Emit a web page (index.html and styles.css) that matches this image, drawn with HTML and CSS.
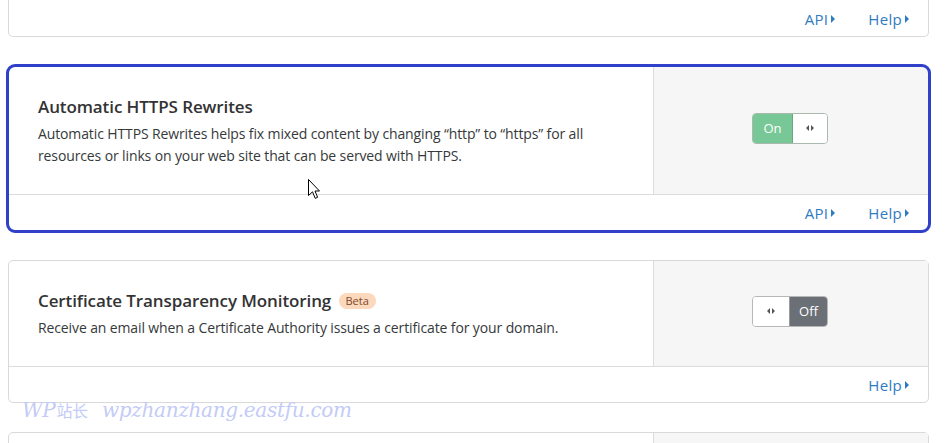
FILE: index.html
```html
<!DOCTYPE html>
<html lang="en">
<head>
<meta charset="utf-8">
<title>SSL/TLS settings</title>
<link rel="stylesheet" href="styles.css">
</head>
<body>
<div class="page">
  <section class="card card-tail">
    <footer class="card-foot">
      <a class="foot-link" href="#">API<svg class="caret" viewBox="0 0 4 8" width="4" height="8"><path d="M0 0L4 4L0 8Z"/></svg></a>
      <a class="foot-link" href="#">Help<svg class="caret" viewBox="0 0 4 8" width="4" height="8"><path d="M0 0L4 4L0 8Z"/></svg></a>
    </footer>
  </section>

  <section class="card is-focused">
    <div class="card-main">
      <div class="card-body">
        <h3 class="card-title">Automatic HTTPS Rewrites</h3>
        <p class="card-text">Automatic HTTPS Rewrites helps fix mixed content by changing “http” to “https” for all resources or links on your web site that can be served with HTTPS.</p>
      </div>
      <div class="card-control">
        <div class="toggle is-on">
          <span class="toggle-label">On</span>
          <span class="toggle-handle"><svg viewBox="0 0 8 6" width="8" height="6"><path d="M3 0L0 3L3 6Z M5 0L8 3L5 6Z"/></svg></span>
        </div>
      </div>
    </div>
    <footer class="card-foot">
      <a class="foot-link" href="#">API<svg class="caret" viewBox="0 0 4 8" width="4" height="8"><path d="M0 0L4 4L0 8Z"/></svg></a>
      <a class="foot-link" href="#">Help<svg class="caret" viewBox="0 0 4 8" width="4" height="8"><path d="M0 0L4 4L0 8Z"/></svg></a>
    </footer>
  </section>

  <section class="card">
    <div class="card-main">
      <div class="card-body">
        <h3 class="card-title">Certificate Transparency Monitoring <span class="badge">Beta</span></h3>
        <p class="card-text">Receive an email when a Certificate Authority issues a certificate for your domain.</p>
      </div>
      <div class="card-control">
        <div class="toggle is-off">
          <span class="toggle-handle"><svg viewBox="0 0 8 6" width="8" height="6"><path d="M3 0L0 3L3 6Z M5 0L8 3L5 6Z"/></svg></span>
          <span class="toggle-label">Off</span>
        </div>
      </div>
    </div>
    <footer class="card-foot">
      <a class="foot-link" href="#">Help<svg class="caret" viewBox="0 0 4 8" width="4" height="8"><path d="M0 0L4 4L0 8Z"/></svg></a>
    </footer>
  </section>

  <section class="card card-next">
    <div class="card-main">
      <div class="card-body"></div>
      <div class="card-control"></div>
    </div>
  </section>

  <div class="watermark">WP<span class="wm-cjk">站长</span> wpzhanzhang.eastfu.com</div>
  <svg class="cursor" viewBox="0 0 12 20" width="12" height="20"><path d="M0.5 0.5L0.5 16.5L4.5 12.8L7.2 19.3L9.6 18.3L7 12L11.5 12Z" fill="#fff" stroke="#000" stroke-width="1" stroke-linejoin="miter"/></svg>
</div>
</body>
</html>
```
FILE: styles.css
```css
* { box-sizing: border-box; }
html, body { margin: 0; padding: 0; background: #fff; }
body {
  font-family: "Open Sans", "Noto Sans", "Liberation Sans", sans-serif;
  color: #333;
  overflow: hidden;
}
.page {
  position: relative;
  padding: 0 19px 0 8px;
  height: 443px;
  overflow: hidden;
}
.card {
  border: 1px solid #d9d9d9;
  border-radius: 5px;
  background: #fff;
  margin-bottom: 29px;
}
.card-tail {
  border-top: none;
  border-top-left-radius: 0;
  border-top-right-radius: 0;
}
.card.is-focused {
  outline: 3px solid #3140c9;
  outline-offset: -1px;
  border-radius: 7px;
}
.card-main {
  display: flex;
}
.card-body {
  flex: 1 1 auto;
  padding: 29px 30px 27px 29px;
}
.card-control {
  flex: 0 0 275px;
  background: #f6f6f6;
  border-left: 1px solid #dcdcdc;
  display: flex;
  align-items: center;
  justify-content: center;
  padding: 0 2px 5px 0;
}
.card.is-focused .card-control { border-top-right-radius: 6px; }
.card-title {
  margin: 0 0 5px;
  font-size: 17px;
  line-height: 22px;
  font-weight: 600;
  color: #333;
  letter-spacing: -0.1px;
}
.card-text {
  margin: 0;
  font-size: 14px;
  line-height: 22px;
  color: #36393a;
  letter-spacing: -0.12px;
}
.badge {
  display: inline-block;
  vertical-align: 2px;
  margin-left: 3px;
  padding: 0 7px;
  height: 16px;
  line-height: 16px;
  border-radius: 8px;
  background: #fcd8bd;
  color: #7a4a2b;
  font-size: 11px;
  font-weight: 400;
  letter-spacing: 0;
}
.card-foot {
  border-top: 1px solid #dcdcdc;
  height: 36px;
  display: flex;
  align-items: center;
  justify-content: flex-end;
  gap: 33px;
  padding: 0 19px 0;
}
.card-tail .card-foot { border-top: none; padding-top: 1px; }
.foot-link {
  display: inline-flex;
  align-items: center;
  gap: 3px;
  font-size: 15px;
  letter-spacing: 0.3px;
  color: #2f7bbf;
  text-decoration: none;
}
.caret { fill: #2f7bbf; }
.toggle {
  display: flex;
  width: 76px;
  height: 31px;
  border: 1px solid #b7b7b7;
  border-radius: 4px;
  overflow: hidden;
  font-size: 13px;
}
.toggle-label {
  display: flex;
  align-items: center;
  justify-content: center;
  color: #fff;
}
.toggle-handle {
  display: flex;
  align-items: center;
  justify-content: center;
  background: #fff;
}
.toggle-handle svg { fill: #555; }
.toggle.is-on .toggle-label { width: 39px; background: #78c796; }
.toggle.is-on .toggle-handle { flex: 1; border-left: 1px solid #6aa882; }
.toggle.is-on { border-color: #a9b9ae; }
.toggle.is-off .toggle-handle { width: 37px; border-right: 1px solid #9a9a9a; }
.toggle.is-off .toggle-label { flex: 1; background: #6b7076; }
.card-next {
  height: 40px;
  margin-bottom: 0;
}
.card-next .card-main { height: 100%; }
.watermark {
  position: absolute;
  left: 22px;
  top: 398px;
  font-family: "DejaVu Serif", "Liberation Serif", serif;
  font-style: italic;
  font-size: 20px;
  color: #c3cbf6;
  letter-spacing: -0.3px;
  white-space: nowrap;
}
.wm-cjk {
  font-family: "Noto Sans CJK SC", sans-serif;
  font-style: normal;
  font-size: 16px;
  margin: 0 8px 0 1px;
}
.cursor {
  position: absolute;
  left: 308px;
  top: 179px;
}
```
